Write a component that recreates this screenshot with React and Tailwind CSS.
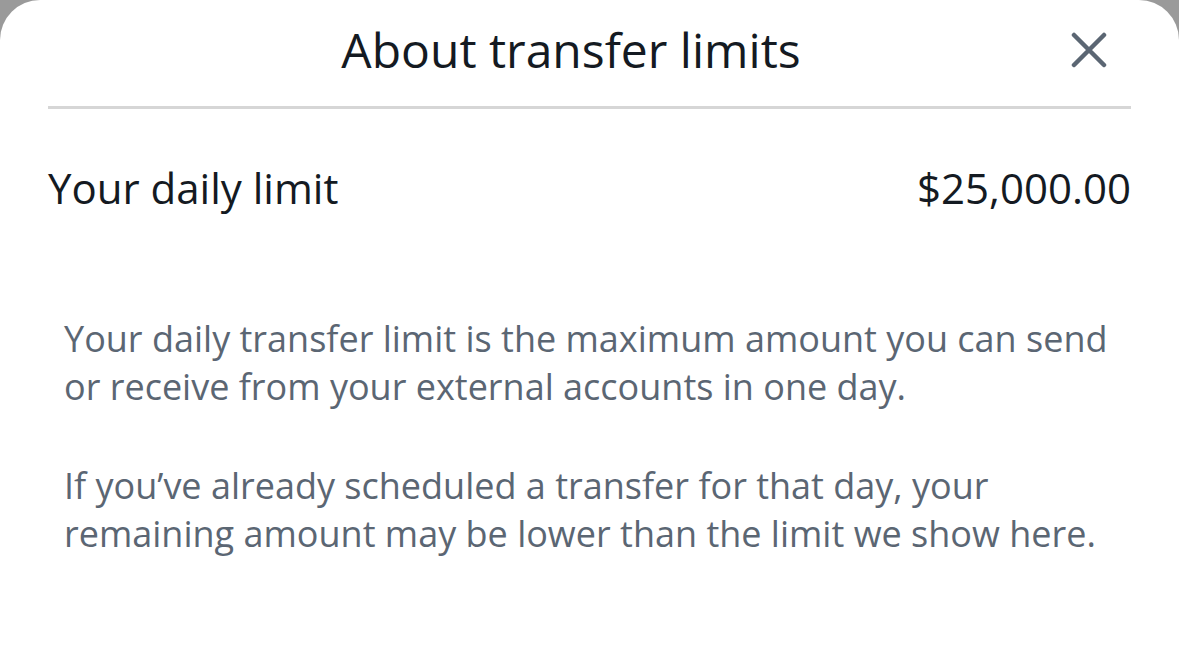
import React from 'react';

export default function App() {
  return (
    <div className="h-[645px] w-full bg-[#9a9a9a] overflow-hidden" style={{ fontFamily: '"Open Sans", sans-serif' }}>
      <div className="h-full bg-white rounded-t-[40px] px-12">
        {/* Header */}
        <div className="relative h-[109px] flex items-center justify-center border-b-[3px] border-[#d6d6d6]">
          <h1 className="text-[48px] leading-none text-[#141a22] -mt-[6px] mr-[37px]">About transfer limits</h1>
          <button className="absolute right-[24px] top-[32px] w-9 h-9 flex items-center justify-center">
            <svg viewBox="0 0 36 36" className="w-9 h-9" fill="none" stroke="#5b6673" strokeWidth="4.5" strokeLinecap="round">
              <path d="M3 3 L33 33 M33 3 L3 33" />
            </svg>
          </button>
        </div>

        {/* Limit row */}
        <div className="flex items-center justify-between h-[158px] pb-[1px]">
          <span className="text-[42px] leading-none text-[#141a22]">Your daily limit</span>
          <span className="text-[42px] leading-none text-[#141a22]">$25,000.00</span>
        </div>

        {/* Description */}
        <div className="px-4 pt-[48px] text-[36px] leading-[48px] text-[#5b6673] flex flex-col gap-[51px]">
          <p>Your daily transfer limit is the maximum amount you can send or receive from your external accounts in one day.</p>
          <p>If you’ve already scheduled a transfer for that day, your remaining amount may be lower than the limit we show here.</p>
        </div>
      </div>
    </div>
  );
}
